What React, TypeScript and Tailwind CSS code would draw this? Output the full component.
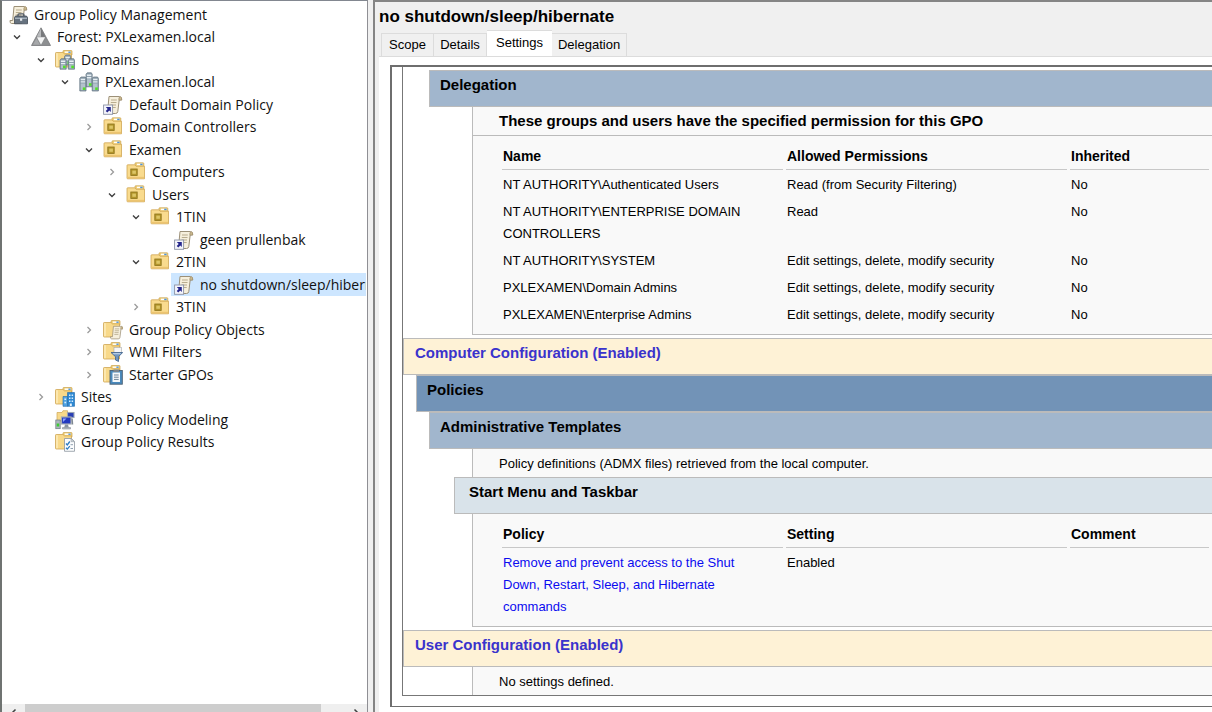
import type { ReactNode } from "react";

/* ---------- icons ---------- */

function Icon({ children }: { children: ReactNode }) {
  return (
    <svg viewBox="0 0 20 20" className="h-5 w-5 shrink-0" aria-hidden="true">
      {children}
    </svg>
  );
}

const FolderShape = () => (
  <>
    <path d="M8 3.500V1.200Q8 .5 8.700.5h7.600q.7 0 .7.700V5H8z" fill="#f3d27c" stroke="#c9a24c" strokeWidth=".7" />
    <rect x="9.800" y="1.500" width="5.800" height="1.400" fill="#fff" />
    <rect x="13.400" y="1.500" width="2.200" height="1.400" fill="#4f93d8" />
    <path d="M.5 3.200Q.5 2.500 1.200 2.500H8l1.500 1.400h7V17H1.200Q.5 17 .5 16.300z" fill="#f8d98a" stroke="#cfa654" strokeWidth=".8" />
    <path d="M1.200 3.200h1.600v13H1.200z" fill="#fdebb8" />
  </>
);

const Server = ({ x, y, h = 12 }: { x: number; y: number; h?: number }) => (
  <g transform={`translate(${x} ${y})`}>
    <path d={`M0 1.500L1.200 0h4.200l.8 1.500V${h}H0z`} fill="#8fa0ad" stroke="#5f7180" strokeWidth=".7" />
    <path d="M.9 1.800h4.400v1.500H.9zM.9 4.200h4.400v1.400H.9z" fill="#e6eef3" />
    <rect x=".9" y="6.500" width="4.400" height={h - 7.400} fill="#b3c2cc" />
    <rect x="3" y={h - 3.600} width="2.600" height="2.600" fill="#52e02a" />
  </g>
);

const ScrollShape = () => (
  <>
    <path d="M6 1.500h10.500Q19 1.700 18.700 5h-2.500l-1.400 11.500q-.3 2-2.300 2H3.500Q1.700 18.300 2 15.500h2.700z" fill="#f6efdc" stroke="#9c9078" strokeWidth="1" />
    <path d="M15.800 5q-.3-3.300 1.500-3.200Q19 2 18.700 5z" fill="#cbb98f" stroke="#9c8c69" strokeWidth=".6" />
    <path d="M8 5h5.800M7.800 7.500h5.700M7.500 10H13M7.200 12.500h5.500" stroke="#b8ac8e" strokeWidth="1.100" />
  </>
);

const ConsoleIcon = () => (
  <Icon>
    <ScrollShape />
    <path d="M10 11.500V9.800q0-1 1-1h4q1 0 1 1v1.700" fill="none" stroke="#4f5864" strokeWidth="1.200" />
    <path d="M6.500 12.500l1-1.500h11l1 1.500v6.300h-13z" fill="#66727f" stroke="#414a56" strokeWidth=".8" />
    <path d="M7 12.600h12v1.400H7z" fill="#a5b0bc" />
    <rect x="12" y="13.300" width="2.200" height="2.500" fill="#e4e8ec" />
  </Icon>
);

const ForestIcon = () => (
  <Icon>
    <path d="M10 .8L19.500 18.500H.5z" fill="#8b8d8f" stroke="#77797b" strokeWidth=".8" strokeLinejoin="round" />
    <path d="M10 1.500v8.300H5.800z" fill="#b9bbbd" />
    <path d="M10 1.500v8.300h4.200z" fill="#77797b" />
    <path d="M5.900 10.300h8.200L10 17.800z" fill="#f2f3f3" />
    <path d="M5.400 11.300l3.600 6.400H2z" fill="#a6a8aa" />
    <path d="M14.600 11.300l3.400 6.400h-7z" fill="#8d8f91" />
  </Icon>
);

const DomainsIcon = () => (
  <Icon>
    <FolderShape />
    <Server x={9.5} y={5} h={10} />
    <Server x={5} y={8.7} h={10.5} />
    <Server x={13.3} y={8.7} h={10.5} />
  </Icon>
);

const DomainIcon = () => (
  <Icon>
    <Server x={7} y={0.8} h={14} />
    <Server x={0.8} y={5} h={14} />
    <Server x={13.2} y={5} h={14} />
  </Icon>
);

const GpoLinkIcon = () => (
  <Icon>
    <ScrollShape />
    <rect x=".6" y="10" width="9" height="9.300" fill="#f4f5fb" stroke="#8c93a5" strokeWidth=".9" />
    <path d="M2.800 12h5v5L6.300 15.500l-2 2-1.600-1.600 2-2z" fill="#26278d" />
  </Icon>
);

const OuIcon = () => (
  <Icon>
    <path d="M9 3V1.400Q9 .8 9.600.8h7.500q.7 0 .7.700V5H9z" fill="#f3d27c" stroke="#c9a24c" strokeWidth=".7" />
    <rect x="11" y="1.700" width="5.600" height="1.500" fill="#fff" />
    <rect x="14.200" y="1.700" width="2.400" height="1.500" fill="#4f93d8" />
    <path d="M1 3.500Q1 2.800 1.700 2.800h7l1.300 1.400h8.500V16.800H1.700Q1 16.800 1 16.100z" fill="#f9db8e" stroke="#cfa654" strokeWidth=".8" />
    <path d="M1.500 14.800h16.600v1.600H1.500z" fill="#ecc470" />
    <rect x="4.800" y="7" width="6.400" height="6.500" fill="#b3942a" stroke="#8c731b" strokeWidth=".8" />
    <rect x="6.300" y="8.600" width="3.600" height="3.200" fill="#dcc565" />
  </Icon>
);

const GpoFolderIcon = () => (
  <Icon>
    <FolderShape />
    <g transform="translate(6 5.200) scale(.74)">
      <ScrollShape />
    </g>
  </Icon>
);

const WmiIcon = () => (
  <Icon>
    <FolderShape />
    <rect x="11" y="5.500" width="7.500" height="6" fill="#f6f6f6" stroke="#aaa" strokeWidth=".6" />
    <path d="M8 10.500h11.700l-4.200 4.200V19.500l-3-1.500v-3.300z" fill="#6f96bf" stroke="#3e618a" strokeWidth=".8" />
    <path d="M9.500 11.200h8.500l-1 1h-6.500z" fill="#c9dcf0" />
  </Icon>
);

const StarterIcon = () => (
  <Icon>
    <FolderShape />
    <rect x="7" y="5.500" width="12.300" height="13.700" fill="#4a8abd" stroke="#4b5f72" strokeWidth=".9" />
    <path d="M9.500 7.500h7.500V17H9.500z" fill="#f5f8fa" />
    <path d="M10.500 4.500H16V7h-5.500z" fill="#7c858d" />
    <path d="M11 10h4.700M11 12.200h4.700M11 14.400h4.700" stroke="#6d8296" strokeWidth="1" />
  </Icon>
);

const SitesIcon = () => (
  <Icon>
    <FolderShape />
    <path d="M12.500 5.500h7v13.800h-7z" fill="#2d88d2" stroke="#1c66a8" strokeWidth=".6" />
    <path d="M8 9.500h4.500v9.800H8z" fill="#52a4e2" stroke="#1c66a8" strokeWidth=".6" />
    <path d="M14 7.400h1.500v1.500H14zM16.600 7.400h1.500v1.500h-1.500zM14 10.400h1.500v1.500H14zM16.600 10.400h1.500v1.500h-1.500zM14 13.400h1.500v1.500H14zM16.600 13.400h1.500v1.500h-1.500zM9.400 11.400h1.700v1.500H9.400zM9.400 14.800h1.700v1.500H9.400z" fill="#d6edff" />
    <path d="M14.800 16.500h2V19h-2z" fill="#e9f5ff" />
  </Icon>
);

const ModelingIcon = () => (
  <Icon>
    <path d="M2 2.500h5L8 .7h4.500V11H2z" fill="#f8d98a" stroke="#cfa654" strokeWidth=".7" />
    <rect x="12.500" y="2.500" width="6.500" height="5" fill="#2a3fb4" stroke="#9aa4b2" strokeWidth="1.100" />
    <rect x="6.500" y="7" width="9.500" height="7" fill="#2238c0" stroke="#a3abb5" strokeWidth="1.200" />
    <path d="M8 8.500h3.500L8 12z" fill="#8fa4ff" />
    <path d="M10 14.500h3l.8 3H9.200z" fill="#8a94a2" />
    <path d="M7.500 17.500h8V19h-8z" fill="#b9c0c8" stroke="#78818b" strokeWidth=".5" />
    <rect x=".8" y="10" width="4.400" height="8.700" fill="#aeb7bf" stroke="#6d7780" strokeWidth=".7" />
    <rect x="1.700" y="13.500" width="2.500" height="3" fill="#3ccc34" />
    <path d="M17 8.500l.5 6" stroke="#7d8790" strokeWidth="1.500" />
  </Icon>
);

const ResultsIcon = () => (
  <Icon>
    <FolderShape />
    <path d="M9.500 6.500h6.800l3.200 3V19.300h-10z" fill="#fbfcfd" stroke="#8d969f" strokeWidth=".8" />
    <path d="M16 6.700v3h3.300z" fill="#cfd6dc" stroke="#8d969f" strokeWidth=".5" />
    <path d="M11 11.500l1.300 1.500L14.800 9.500M11 15.800l1.300 1.300 2.500-3" fill="none" stroke="#2f7cc4" strokeWidth="1.300" />
    <path d="M15.500 12.700h2.500M15.500 16.500h2.500" stroke="#8fa0b0" strokeWidth="1" />
  </Icon>
);

/* ---------- console tree ---------- */

type Node = {
  level: number;
  label: string;
  icon: () => ReactNode;
  open?: boolean;
  selected?: boolean;
};

const nodes: Node[] = [
  { level: 0, label: "Group Policy Management", icon: ConsoleIcon },
  { level: 1, label: "Forest: PXLexamen.local", icon: ForestIcon, open: true },
  { level: 2, label: "Domains", icon: DomainsIcon, open: true },
  { level: 3, label: "PXLexamen.local", icon: DomainIcon, open: true },
  { level: 4, label: "Default Domain Policy", icon: GpoLinkIcon },
  { level: 4, label: "Domain Controllers", icon: OuIcon, open: false },
  { level: 4, label: "Examen", icon: OuIcon, open: true },
  { level: 5, label: "Computers", icon: OuIcon, open: false },
  { level: 5, label: "Users", icon: OuIcon, open: true },
  { level: 6, label: "1TIN", icon: OuIcon, open: true },
  { level: 7, label: "geen prullenbak", icon: GpoLinkIcon },
  { level: 6, label: "2TIN", icon: OuIcon, open: true },
  { level: 7, label: "no shutdown/sleep/hibernate", icon: GpoLinkIcon, selected: true },
  { level: 6, label: "3TIN", icon: OuIcon, open: false },
  { level: 4, label: "Group Policy Objects", icon: GpoFolderIcon, open: false },
  { level: 4, label: "WMI Filters", icon: WmiIcon, open: false },
  { level: 4, label: "Starter GPOs", icon: StarterIcon, open: false },
  { level: 2, label: "Sites", icon: SitesIcon, open: false },
  { level: 2, label: "Group Policy Modeling", icon: ModelingIcon },
  { level: 2, label: "Group Policy Results", icon: ResultsIcon },
];

const indent = [
  "pl-0",
  "pl-2",
  "pl-8",
  "pl-14",
  "pl-20",
  "pl-[103px]",
  "pl-[127px]",
  "pl-[151px]",
];

function TreeRow({ node }: { node: Node }) {
  const NodeIcon = node.icon;
  return (
    <li
      role="treeitem"
      aria-level={node.level + 1}
      aria-expanded={node.open}
      aria-selected={!!node.selected}
      className={`flex items-stretch odd:h-[23px] even:h-[22px] ${indent[node.level]}`}
    >
      {node.open !== undefined ? (
        <button
          type="button"
          aria-label={`${node.open ? "Collapse" : "Expand"} ${node.label}`}
          className="flex w-[14px] shrink-0 items-center justify-center"
        >
          <svg viewBox="0 0 10 10" className="h-[10px] w-[10px]" aria-hidden="true">
            {node.open ? (
              <path d="M2 3.500l3 3 3-3" fill="none" stroke="#404040" strokeWidth="1.400" />
            ) : (
              <path d="M3.500 2l3 3-3 3" fill="none" stroke="#9b9b9b" strokeWidth="1.300" />
            )}
          </svg>
        </button>
      ) : (
        node.level > 0 && <span className="w-[14px] shrink-0" />
      )}
      <span
        className={`flex min-w-0 flex-1 items-center gap-1.5 overflow-hidden whitespace-nowrap ${
          node.level > 0 ? "ml-1 pl-[3px]" : "pl-1.5"
        } ${node.selected ? "bg-[#cde6ff]" : ""}`}
      >
        <NodeIcon />
        {node.label}
      </span>
    </li>
  );
}

function ConsoleTree() {
  return (
    <nav className="flex w-[368px] shrink-0 flex-col border-t border-r border-l-2 border-t-[#828790] border-r-[#8f8f94] border-l-[#6f7371] bg-white font-['Open_Sans','Noto_Sans',sans-serif] text-[14px] leading-5 text-[#111]">
      <ul role="tree" aria-label="Console tree" className="flex-1 overflow-hidden pt-0.5 pr-px">
        {nodes.map((n, i) => (
          <TreeRow key={i} node={n} />
        ))}
      </ul>
      <div className="flex h-2 shrink-0 overflow-hidden bg-[#efefef]">
        <button type="button" aria-label="Scroll left" className="flex w-[23px] shrink-0 justify-center pt-1">
          <svg viewBox="0 0 10 10" className="h-[10px] w-[10px]" aria-hidden="true">
            <path d="M6.500 1.500L3 5l3.500 3.500" fill="none" stroke="#404040" strokeWidth="1.500" />
          </svg>
        </button>
        <div className="flex-1 bg-[#cdcdcd]" />
        <div className="w-[23px]" />
        <button type="button" aria-label="Scroll right" className="flex w-[23px] shrink-0 justify-center pt-1">
          <svg viewBox="0 0 10 10" className="h-[10px] w-[10px]" aria-hidden="true">
            <path d="M3.500 1.500L7 5 3.500 8.500" fill="none" stroke="#404040" strokeWidth="1.500" />
          </svg>
        </button>
      </div>
    </nav>
  );
}

/* ---------- settings report ---------- */

const barStyles = {
  config: "pl-[11px] bg-[#fef2d6] text-[#3a33cc]",
  policies: "ml-[13px] pl-[10px] bg-[#7293b7]",
  section: "ml-[26px] pl-[10px] bg-[#a1b6cd]",
  group: "ml-[51px] pl-[14px] bg-[#d9e3ea]",
};

function Bar({ kind, children }: { kind: keyof typeof barStyles; children: ReactNode }) {
  return (
    <h2 className={`h-[37px] border border-r-0 border-[#bbbbbb] pt-1 text-[15px] leading-5 font-bold ${barStyles[kind]}`}>
      {children}
    </h2>
  );
}

function Box({ open = false, children }: { open?: boolean; children: ReactNode }) {
  return (
    <div className={`ml-[69px] border-l border-[#bbbbbb] bg-[#f9f9f9] ${open ? "" : "border-b"}`}>
      {children}
    </div>
  );
}

function ReportTable({ head, rows }: { head: string[]; rows: ReactNode[][] }) {
  return (
    <div className="pt-[5px] pb-1 pl-[26px]">
      <table className="w-full table-fixed border-separate border-spacing-[3px] text-left text-[13px] leading-[22px]">
        <thead>
          <tr className="text-[14px]">
            {head.map((h, i) => (
              <th
                key={h}
                className={`border-b border-[#c8c8c8] px-px pt-px pb-0.5 font-bold ${i < 2 ? "w-[281px]" : ""}`}
              >
                {h}
              </th>
            ))}
          </tr>
        </thead>
        <tbody>
          {rows.map((r, i) => (
            <tr key={i}>
              {r.map((c, j) => (
                <td key={j} className="p-px align-top">
                  {c}
                </td>
              ))}
            </tr>
          ))}
        </tbody>
      </table>
    </div>
  );
}

const edit = "Edit settings, delete, modify security";

const permissions: ReactNode[][] = [
  ["NT AUTHORITY\\Authenticated Users", "Read (from Security Filtering)", "No"],
  ["NT AUTHORITY\\ENTERPRISE DOMAIN CONTROLLERS", "Read", "No"],
  ["NT AUTHORITY\\SYSTEM", edit, "No"],
  ["PXLEXAMEN\\Domain Admins", edit, "No"],
  ["PXLEXAMEN\\Enterprise Admins", edit, "No"],
];

const policies: ReactNode[][] = [
  [
    <a href="#policy" className="block max-w-[250px] text-[#0b0bf0]">
      Remove and prevent access to the Shut Down, Restart, Sleep, and Hibernate commands
    </a>,
    "Enabled",
    "",
  ],
];

function Report() {
  return (
    <div className="border-b border-l border-[#777777] pt-[3px]">
      <Bar kind="section">Delegation</Bar>
      <Box>
        <p className="border-b border-[#bbbbbb] py-1 pl-[26px] text-[15px] leading-5 font-bold">
          These groups and users have the specified permission for this GPO
        </p>
        <ReportTable head={["Name", "Allowed Permissions", "Inherited"]} rows={permissions} />
      </Box>
      <div className="h-[3px]" />
      <Bar kind="config">Computer Configuration (Enabled)</Bar>
      <Bar kind="policies">Policies</Bar>
      <Bar kind="section">Administrative Templates</Bar>
      <Box open>
        <p className="pt-[5px] pb-[3px] pl-[26px] leading-5">
          Policy definitions (ADMX files) retrieved from the local computer.
        </p>
      </Box>
      <Bar kind="group">Start Menu and Taskbar</Bar>
      <Box>
        <ReportTable head={["Policy", "Setting", "Comment"]} rows={policies} />
      </Box>
      <div className="h-[3px]" />
      <Bar kind="config">User Configuration (Enabled)</Bar>
      <Box open>
        <p className="pt-[5px] pb-[3px] pl-[26px] leading-5">No settings defined.</p>
      </Box>
    </div>
  );
}

const tabs = ["Scope", "Details", "Settings", "Delegation"];

export default function App() {
  return (
    <div className="flex h-screen overflow-hidden bg-[#f0f0f0] text-black">
      <ConsoleTree />
      <main className="ml-[5px] flex min-w-0 flex-1 flex-col border-t-2 border-l-2 border-[#858585] pl-1 font-['Liberation_Sans',Arial,sans-serif] text-[13px]">
        <h1 className="h-7 pt-1 text-[17px] leading-[22px] font-bold">no shutdown/sleep/hibernate</h1>
        <div role="tablist" className="flex items-end pl-0.5">
          {tabs.map((t) => {
            const active = t === "Settings";
            return (
              <button
                key={t}
                type="button"
                role="tab"
                aria-selected={active}
                className={
                  active
                    ? "h-[26px] border-t border-[#dcdcdc] bg-white px-[9px] pb-0.5"
                    : "h-[23px] min-w-[53px] border-t border-r border-[#dcdcdc] px-1.5 first:border-l"
                }
              >
                {t}
              </button>
            );
          })}
        </div>
        <section className="flex-1 overflow-hidden border-t border-[#dcdcdc] bg-white pt-2 pl-[11px]">
          <div className="border-t-2 border-b border-l-2 border-[#6e6e6e] pb-2.5 pl-2.5">
            <Report />
          </div>
        </section>
      </main>
    </div>
  );
}
